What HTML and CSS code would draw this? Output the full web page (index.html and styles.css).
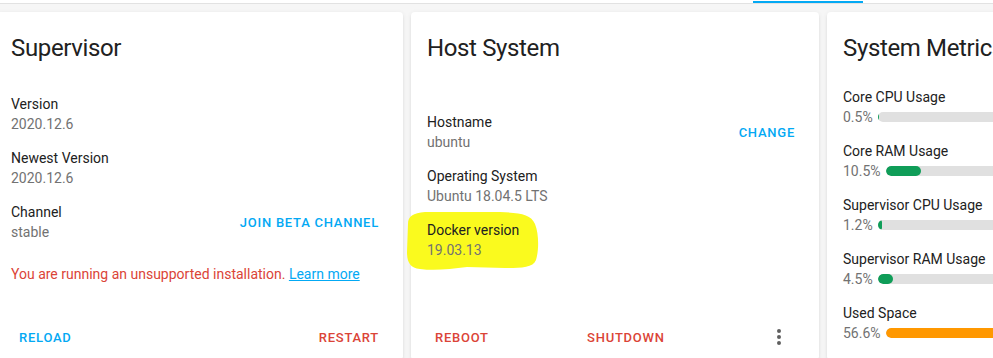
FILE: index.html
```html
<!DOCTYPE html>
<html lang="en">
<head>
    <meta charset="UTF-8">
    <meta name="viewport" content="width=device-width, initial-scale=1.0">
    <title>Supervisor - System</title>
    <link rel="stylesheet" href="styles.css">
</head>
<body>
    <header class="tabs">
        <div class="tab-active"></div>
    </header>
    <main class="cards">
        <!-- Supervisor -->
        <section class="card">
            <h1 class="card-header">Supervisor</h1>
            <div class="card-content">
                <div class="row">
                    <div class="info">
                        <div class="label">Version</div>
                        <div class="value">2020.12.6</div>
                    </div>
                </div>
                <div class="row">
                    <div class="info">
                        <div class="label">Newest Version</div>
                        <div class="value">2020.12.6</div>
                    </div>
                </div>
                <div class="row">
                    <div class="info">
                        <div class="label">Channel</div>
                        <div class="value">stable</div>
                    </div>
                    <button class="btn">Join beta channel</button>
                </div>
                <p class="error">You are running an unsupported installation. <a href="#">Learn more</a></p>
            </div>
            <div class="card-actions">
                <button class="btn">Reload</button>
                <button class="btn warn">Restart</button>
            </div>
        </section>

        <!-- Host System -->
        <section class="card">
            <h1 class="card-header">Host System</h1>
            <svg class="marker" width="136" height="64" viewBox="0 0 136 64">
                <path d="M3,14 C3,6 8,3 20,2 L95,2 C115,3 126,4 130,14 C134,24 134,40 131,50 C128,58 115,58 100,58 L62,57 C45,59 30,61 15,59 C5,58 2,52 2,42 Z"/>
            </svg>
            <div class="card-content host">
                <div class="row">
                    <div class="info">
                        <div class="label">Hostname</div>
                        <div class="value">ubuntu</div>
                    </div>
                    <button class="btn">Change</button>
                </div>
                <div class="row">
                    <div class="info">
                        <div class="label">Operating System</div>
                        <div class="value">Ubuntu 18.04.5 LTS</div>
                    </div>
                </div>
                <div class="row">
                    <div class="info">
                        <div class="label">Docker version</div>
                        <div class="value">19.03.13</div>
                    </div>
                </div>
            </div>
            <div class="card-actions">
                <button class="btn warn">Reboot</button>
                <button class="btn warn">Shutdown</button>
                <button class="icon-btn" aria-label="menu">
                    <svg width="24" height="24" viewBox="0 0 24 24"><path d="M12,16A2,2 0 0,1 14,18A2,2 0 0,1 12,20A2,2 0 0,1 10,18A2,2 0 0,1 12,16M12,10A2,2 0 0,1 14,12A2,2 0 0,1 12,14A2,2 0 0,1 10,12A2,2 0 0,1 12,10M12,4A2,2 0 0,1 14,6A2,2 0 0,1 12,8A2,2 0 0,1 10,6A2,2 0 0,1 12,4Z"/></svg>
                </button>
            </div>
        </section>

        <!-- System Metrics -->
        <section class="card">
            <h1 class="card-header">System Metrics</h1>
            <div class="card-content metrics">
                <div class="metric">
                    <div class="label">Core CPU Usage</div>
                    <div class="metric-value"><span>0.5%</span><div class="bar"><div class="fill" style="width:0.5%"></div></div></div>
                </div>
                <div class="metric">
                    <div class="label">Core RAM Usage</div>
                    <div class="metric-value"><span>10.5%</span><div class="bar"><div class="fill" style="width:10.5%"></div></div></div>
                </div>
                <div class="metric">
                    <div class="label">Supervisor CPU Usage</div>
                    <div class="metric-value"><span>1.2%</span><div class="bar"><div class="fill" style="width:1.2%"></div></div></div>
                </div>
                <div class="metric">
                    <div class="label">Supervisor RAM Usage</div>
                    <div class="metric-value"><span>4.5%</span><div class="bar"><div class="fill" style="width:4.5%"></div></div></div>
                </div>
                <div class="metric">
                    <div class="label">Used Space</div>
                    <div class="metric-value"><span>56.6%</span><div class="bar"><div class="fill high" style="width:56.6%"></div></div></div>
                </div>
            </div>
        </section>
    </main>
</body>
</html>
```

FILE: styles.css
```css
*{margin: 0;padding: 0;box-sizing: border-box;}
html,body{
    height: 100%;
    overflow: hidden;
}
body{
    background: #f6f6f6;
    font-family: Roboto, "Noto Sans", sans-serif;
    font-size: 14px;
    line-height: 20px;
    color: #212121;
}
.tabs{
    display: flex;
    height: 4px;
    background: #ffffff;
    border-bottom: 1px solid #e2e2e2;
}
.tab-active{
    margin-left: 753px;
    margin-top: 1px;
    width: 110px;
    height: 2px;
    background: #03a9f4;
}
.cards{
    display: flex;
    align-items: flex-start;
    gap: 8px;
    margin-left: -5px;
    padding-top: 8px;
}
.card{
    position: relative;
    display: flex;
    flex-direction: column;
    flex: none;
    width: 408px;
    height: 348px;
    background: #ffffff;
    border-radius: 4px;
    box-shadow: 0 2px 2px 0 rgba(0,0,0,.08), 0 1px 5px 0 rgba(0,0,0,.07), 0 3px 1px -2px rgba(0,0,0,.1);
}
.card-header{
    padding: 20px 16px 14px;
    font-size: 24px;
    font-weight: 400;
    line-height: 32px;
    letter-spacing: -0.015em;
    color: #212121;
    white-space: nowrap;
}
.card-content{
    position: relative;
    z-index: 1;
    padding: 16px 16px 16px;
}
.card-content.host{
    padding-top: 34px;
}
.card-content.metrics{
    padding-top: 9px;
    padding-bottom: 0;
}
.row{
    display: flex;
    justify-content: space-between;
    align-items: center;
    margin-bottom: 14px;
}
.label{
    color: #212121;
}
.value{
    color: #727272;
}
.error{
    margin-top: 22px;
    color: #db4437;
}
.error a{
    color: #03a9f4;
}
.btn{
    height: 36px;
    padding: 0 8px;
    border: none;
    background: none;
    font-family: Roboto, "Noto Sans", sans-serif;
    font-size: 13px;
    font-weight: 500;
    letter-spacing: 0.75px;
    text-transform: uppercase;
    color: #03a9f4;
    cursor: pointer;
}
.btn.warn{
    color: #db4437;
}
.card-actions{
    display: flex;
    justify-content: space-between;
    align-items: center;
    margin-top: auto;
    padding: 5px 16px;
}
.icon-btn{
    display: flex;
    justify-content: center;
    align-items: center;
    width: 48px;
    height: 36px;
    border: none;
    background: none;
}
.icon-btn svg{
    fill: #5f5f5f;
}
.marker{
    position: absolute;
    left: -6px;
    top: 198px;
    z-index: 0;
}
.marker path{
    fill: #fafa1e;
}
.metric{
    margin-bottom: 14px;
}
.metric:last-child{
    margin-bottom: 0;
}
.metric-value{
    display: flex;
    align-items: center;
    gap: 5px;
    color: #727272;
}
.bar{
    flex: 1;
    height: 10px;
    background: #e0e0e0;
    border-radius: 5px;
    overflow: hidden;
}
.fill{
    height: 100%;
    background: #0f9d58;
    border-radius: 5px;
}
.fill.high{
    background: #ff9800;
}
```
